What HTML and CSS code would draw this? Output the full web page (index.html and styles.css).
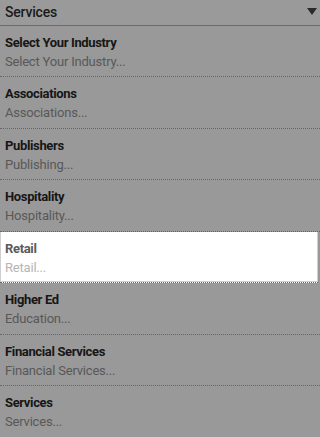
FILE: index.html
```html
<!DOCTYPE html>
<html>
<head>
<meta charset="utf-8">
<link rel="stylesheet" href="styles.css">
</head>
<body>
<div class="dropdown">
  <div class="header">
    <span class="header-label">Services</span>
    <svg class="caret" width="10" height="7" viewBox="0 0 10 7"><polygon points="0,0 10,0 5,7" fill="#2a2a2a"/></svg>
  </div>
  <ul class="list">
    <li class="row"><div class="title">Select Your Industry</div><div class="sub">Select Your Industry...</div></li>
    <li class="row"><div class="title">Associations</div><div class="sub">Associations...</div></li>
    <li class="row"><div class="title">Publishers</div><div class="sub">Publishing...</div></li>
    <li class="row"><div class="title">Hospitality</div><div class="sub">Hospitality...</div></li>
    <li class="row active"><div class="title">Retail</div><div class="sub">Retail...</div></li>
    <li class="row"><div class="title">Higher Ed</div><div class="sub">Education...</div></li>
    <li class="row"><div class="title">Financial Services</div><div class="sub">Financial Services...</div></li>
    <li class="row"><div class="title">Services</div><div class="sub">Services...</div></li>
  </ul>
</div>
</body>
</html>
```

FILE: styles.css
```css
html, body {
  margin: 0;
  padding: 0;
  background: #999999;
  font-family: Roboto, "Noto Sans", sans-serif;
}
.dropdown {
  width: 100%;
}
.header {
  height: 25px;
  background: #9a9a9a;
  border-bottom: 1px solid #6d6d6d;
  display: flex;
  align-items: center;
  justify-content: space-between;
  padding: 0 3px 0 5px;
}
.header-label {
  font-size: 14px;
  font-weight: 500;
  color: #1a1a1a;
  letter-spacing: -0.2px;
  margin-top: -2px;
}
.caret {
  margin-top: -2px;
}
.list {
  list-style: none;
  margin: 0;
  padding: 0;
}
.row {
  height: 51px;
  box-sizing: border-box;
  padding: 7px 0 0 5px;
  border-bottom: 1px dotted #666666;
}
.row + .row {
  height: 51.5px;
}
.title {
  font-size: 13px;
  line-height: 19px;
  font-weight: 700;
  color: #161616;
  letter-spacing: -0.35px;
}
.sub {
  font-size: 13px;
  line-height: 19px;
  color: #585858;
  letter-spacing: -0.2px;
}
.row.active {
  background: #ffffff;
  box-shadow: inset 1px 0 0 #cfcfcf, inset -1px -1px 0 #cfcfcf;
  margin-right: 2px;
}
.row.active .title {
  color: #5a5a5a;
}
.row.active .sub {
  color: #b5b5b5;
}
```
